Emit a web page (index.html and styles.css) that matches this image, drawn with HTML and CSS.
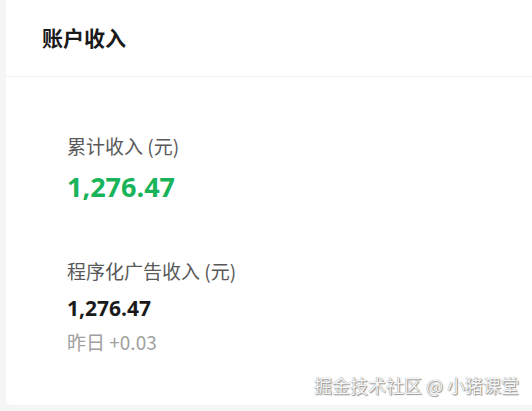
FILE: index.html
```html
<!DOCTYPE html>
<html lang="zh-CN">
<head>
<meta charset="utf-8">
<title>账户收入</title>
<link rel="stylesheet" href="styles.css">
</head>
<body>
<div class="page">
  <div class="card">
    <div class="card-header">账户收入</div>
    <div class="card-body">
      <div class="stat">
        <div class="stat-label">累计收入 (元)</div>
        <div class="stat-value green">1,276.47</div>
      </div>
      <div class="stat stat-second">
        <div class="stat-label">程序化广告收入 (元)</div>
        <div class="stat-value dark">1,276.47</div>
        <div class="stat-sub">昨日 +0.03</div>
      </div>
    </div>
  </div>
  <div class="watermark">掘金技术社区 @ 小猪课堂</div>
</div>
</body>
</html>
```

FILE: styles.css
```css
html, body {
  margin: 0;
  padding: 0;
}
body {
  background: #f5f5f6;
  font-family: "Noto Sans CJK SC", "Noto Sans", sans-serif;
  width: 532px;
  height: 411px;
  overflow: hidden;
}
.page {
  position: relative;
  width: 532px;
  height: 411px;
}
.card {
  margin-left: 6px;
  height: 405px;
  background: #ffffff;
  border-radius: 0 0 0 5px;
}
.card-header {
  height: 73px;
  padding-bottom: 3px;
  display: flex;
  align-items: center;
  padding-left: 36px;
  font-size: 21px;
  font-weight: 700;
  color: #1a1a1a;
  border-bottom: 1px solid #f1f1f1;
}
.card-body {
  padding: 57px 0 0 61px;
}
.stat-label {
  font-size: 19px;
  line-height: 24px;
  color: #595959;
}
.stat-value {
  font-family: "Open Sans", "Noto Sans", sans-serif;
  font-weight: 700;
}
.stat-value.green {
  margin-top: 12px;
  font-size: 27px;
  line-height: 34px;
  color: #19b35a;
}
.stat-second {
  margin-top: 55px;
}
.stat-value.dark {
  margin-top: 11px;
  font-size: 21px;
  line-height: 28px;
  color: #1a1a1a;
}
.stat-sub {
  margin-top: 8px;
  font-size: 19px;
  line-height: 24px;
  color: #a0a0a0;
}
.watermark {
  position: absolute;
  right: 13px;
  top: 373px;
  font-size: 18px;
  line-height: 24px;
  color: #f6f6f6;
  text-shadow: 0 0 1px #6f6f6f, 1px 1px 1px #9a9a9a;
  white-space: nowrap;
}
```
